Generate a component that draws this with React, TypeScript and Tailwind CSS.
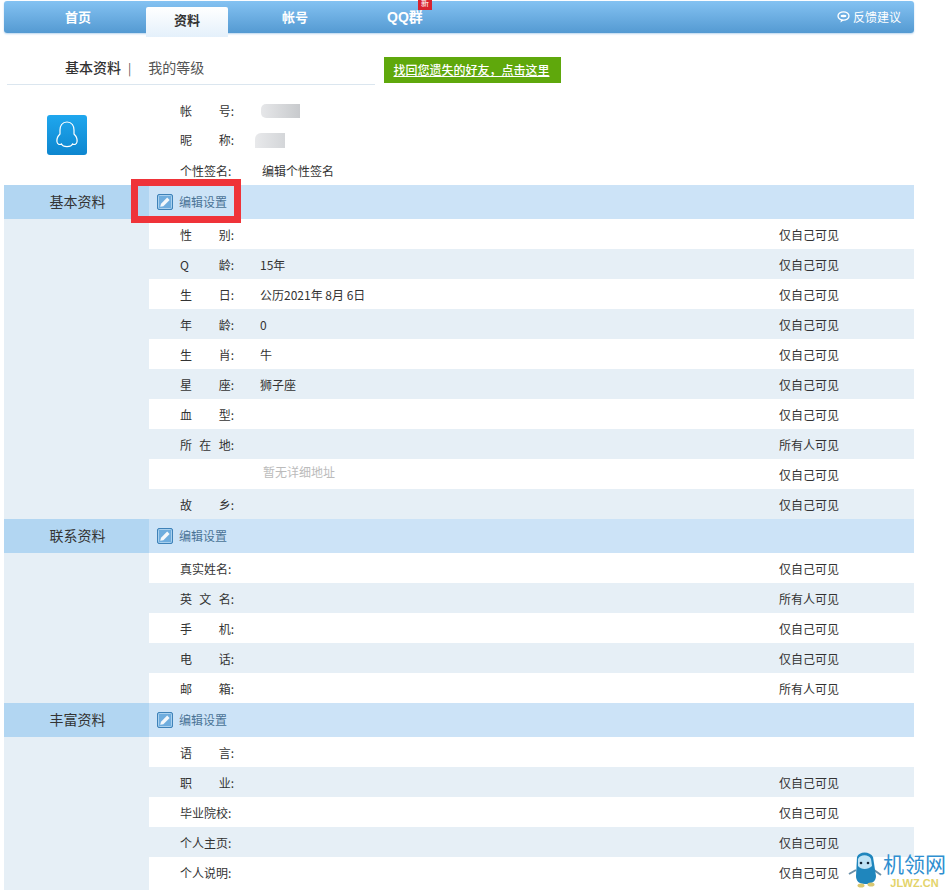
import React from 'react';

const font = { fontFamily: '"Noto Sans CJK SC", "Liberation Sans", sans-serif' };

interface Row {
  label: string[];
  value?: string;
  muted?: boolean;
  scope?: string;
}

const basicRows: Row[] = [
  { label: ['性', '别:'], scope: '仅自己可见' },
  { label: ['Q', '龄:'], value: '15年', scope: '仅自己可见' },
  { label: ['生', '日:'], value: '公历2021年 8月 6日', scope: '仅自己可见' },
  { label: ['年', '龄:'], value: '0', scope: '仅自己可见' },
  { label: ['生', '肖:'], value: '牛', scope: '仅自己可见' },
  { label: ['星', '座:'], value: '狮子座', scope: '仅自己可见' },
  { label: ['血', '型:'], scope: '仅自己可见' },
  { label: ['所', '在', '地:'], scope: '所有人可见' },
  { label: [], value: '暂无详细地址', muted: true, scope: '仅自己可见' },
  { label: ['故', '乡:'], scope: '仅自己可见' },
];

const contactRows: Row[] = [
  { label: ['真实姓名:'], scope: '仅自己可见' },
  { label: ['英', '文', '名:'], scope: '所有人可见' },
  { label: ['手', '机:'], scope: '仅自己可见' },
  { label: ['电', '话:'], scope: '仅自己可见' },
  { label: ['邮', '箱:'], scope: '所有人可见' },
];

const richRows: Row[] = [
  { label: ['语', '言:'] },
  { label: ['职', '业:'], scope: '仅自己可见' },
  { label: ['毕业院校:'], scope: '仅自己可见' },
  { label: ['个人主页:'], scope: '仅自己可见' },
  { label: ['个人说明:'], scope: '仅自己可见' },
];

const EditIcon = () => (
  <svg width="16" height="16" viewBox="0 0 16 16" className="shrink-0">
    <rect x="0.5" y="0.5" width="15" height="15" rx="1.5" fill="#6fadde" stroke="#3f82b8" />
    <rect x="1.5" y="1.5" width="13" height="13" rx="1" fill="none" stroke="#a9d0ee" />
    <path d="M3.2 12.8 L4 9.8 L10.2 3.6 L12.6 6 L6.4 12.2 Z" fill="#f4f8fb" />
  </svg>
);

const Label = ({ parts }: { parts: string[] }) => (
  <span className="flex w-[54px] justify-between">
    {parts.map((p) => (
      <span key={p}>{p}</span>
    ))}
  </span>
);

const Section = ({ title, rows, tail = 0 }: { title: string; rows: Row[]; tail?: number }) => (
  <div className="flex w-[910px] flex-col">
    <div className="flex h-[34px] bg-[#cce3f7]">
      <div className="flex w-[145px] items-center justify-center bg-[#b2d6f2] pb-[2px] pl-[2px] text-[14px] text-[#333]">{title}</div>
      <div className="flex items-center gap-[6px] pl-[8px] text-[12px] text-[#4a7396]">
        <EditIcon />
        <span>编辑设置</span>
      </div>
    </div>
    <div className="flex bg-[#e6eff6]">
      <div className="w-[145px]" />
      <div className="flex-1">
        {rows.map((r, i) => (
          <div
            key={i}
            className={`flex h-[30px] items-center pl-[31px] pt-[2px] text-[12px] text-[#333] ${i % 2 === 0 ? 'bg-white' : 'bg-[#e6eff6]'}`}
          >
            <Label parts={r.label} />
            <span className={`flex-1 ${r.muted ? '-mt-[6px] pl-[29px] text-[#bbb]' : 'pl-[26px]'}`}>{r.value}</span>
            {r.scope && <span className="w-[135px]">{r.scope}</span>}
          </div>
        ))}
        {tail > 0 && <div className="h-[3px] bg-white" />}
      </div>
    </div>
  </div>
);

const Logo = () => (
  <div className="absolute left-[848px] top-[851px] flex items-start">
    <svg width="34" height="37" viewBox="0 0 34 37">
      <path d="M1 23 L8 19 M26 19 L33 24" stroke="#6a8fa8" strokeWidth="2" fill="none" />
      <path d="M9 6 C11 0 22 0 25 6 L28 25 C28 31 23 33 17 33 C11 33 8 30 8 25 Z" fill="#1f86bd" />
      <path d="M10 8 C12 3 21 3 23 8 L24 15 C20 19 13 19 10 15 Z" fill="#bfe3f5" />
      <circle cx="13" cy="12" r="1.3" fill="#123" />
      <circle cx="20" cy="12" r="1.3" fill="#123" />
      <ellipse cx="13" cy="34.5" rx="3.5" ry="2" fill="#d9c872" />
      <ellipse cx="23" cy="33.5" rx="3.5" ry="2" fill="#d9c872" />
    </svg>
    <div className="ml-[1px] flex flex-col items-center">
      <span className="text-[21px] leading-[24px] text-[#2f8fd0]">机领网</span>
      <span className="mt-[3px] text-[11px] font-bold leading-[11px] text-[#e3d36a]" style={{ fontFamily: '"Liberation Sans", sans-serif' }}>
        JLWZ.CN
      </span>
    </div>
  </div>
);

export default function App() {
  return (
    <div className="relative h-[890px] w-[947px] overflow-hidden bg-white" style={font}>
      {/* top nav */}
      <div className="ml-[4px] mt-[1px] flex h-[32px] w-[910px] items-center rounded-[3px] bg-gradient-to-b from-[#84c2f2] to-[#549ad2] text-[13px] font-bold text-white shadow-[0_1px_2px_#b9d6ee]">
        <span className="ml-[61px] w-[81px]">首页</span>
        <span className="mt-[10px] flex h-[30px] w-[82px] items-center justify-center rounded-t-[2px] bg-gradient-to-b from-white to-[#e4f0fb] pb-[4px] text-[#333]">
          资料
        </span>
        <span className="ml-[54px] w-[105px]">帐号</span>
        <span className="relative text-[14px]" style={{ fontFamily: '"Liberation Sans", "Noto Sans CJK SC", sans-serif' }}>
          QQ群
          <span className="absolute left-[31px] -top-[8px] flex h-[11px] w-[14px] items-center justify-center bg-[#d8232f] text-[8px] font-normal leading-none">
            新
          </span>
        </span>
        <span className="ml-auto mr-[13px] flex items-center gap-[3px] text-[12px] font-normal">
          <svg width="13" height="12" viewBox="0 0 13 12">
            <ellipse cx="6.5" cy="5" rx="5.5" ry="4.2" fill="none" stroke="#fff" strokeWidth="1.3" />
            <ellipse cx="6.5" cy="5" rx="3" ry="1.2" fill="#fff" />
            <path d="M4 8.5 L3.5 11.5 L7 9" fill="#fff" />
          </svg>
          反馈建议
        </span>
      </div>

      {/* sub tabs */}
      <div className="relative ml-[7px] mt-[23px] flex h-[29px] w-[368px] items-center border-b border-[#dbe6ef] pb-[5px] pl-[58px] text-[14px] text-[#555]">
        <span className="font-medium text-[#333]">基本资料</span>
        <span className="ml-[7px] mr-[17px] text-[12px] text-[#555]">|</span>
        <span>我的等级</span>
        <span className="absolute left-[377px] top-[1px] flex h-[26px] w-[177px] items-center justify-center bg-[#5fa80c] pr-[2px] text-[12px] font-medium text-white underline">
          找回您遗失的好友，点击这里
        </span>
      </div>

      {/* profile head */}
      <div className="ml-[4px] flex h-[100px] text-[12px] text-[#333]">
        <div className="flex w-[145px] items-start pl-[43px] pt-[30px]">
          <div className="flex h-[40px] w-[40px] items-center justify-center rounded-[3px] bg-gradient-to-b from-[#1fa7ee] to-[#0d86cf]">
            <svg width="24" height="28" viewBox="0 0 24 28" fill="none" stroke="#fff" strokeWidth="1.2">
              <path d="M12 1 C7 1 5 5 5 9 L5 13 C3 15 1.5 18 2 21 C2.5 23.5 5 24 6.5 23 C8 26.5 16 26.5 17.5 23 C19 24 21.5 23.5 22 21 C22.5 18 21 15 19 13 L19 9 C19 5 17 1 12 1 Z" />
            </svg>
          </div>
        </div>
        <div className="flex flex-col pl-[31px] pt-[11px]">
          <div className="flex h-[30px] items-center">
            <Label parts={['帐', '号:']} />
            <span className="ml-[27px] h-[14px] w-[39px] rounded-l-[5px] bg-gradient-to-r from-[#e6e7e9] to-[#c8cacd]" />
          </div>
          <div className="flex h-[30px] items-center">
            <Label parts={['昵', '称:']} />
            <span className="ml-[21px] h-[15px] w-[30px] rounded-tl-[6px] bg-gradient-to-r from-[#e8e9eb] to-[#d4d6d9]" />
          </div>
          <div className="flex h-[30px] items-center pt-[2px]">
            <Label parts={['个性签名:']} />
            <span className="ml-[28px]">编辑个性签名</span>
          </div>
        </div>
      </div>

      <div className="ml-[4px]">
        <Section title="基本资料" rows={basicRows} />
        <Section title="联系资料" rows={contactRows} />
        <Section title="丰富资料" rows={richRows} tail={1} />
      </div>

      {/* red highlight */}
      <div className="absolute left-[131px] top-[179px] h-[44px] w-[110px] border-[7px] border-[#ef3339]" />
      <Logo />
    </div>
  );
}
